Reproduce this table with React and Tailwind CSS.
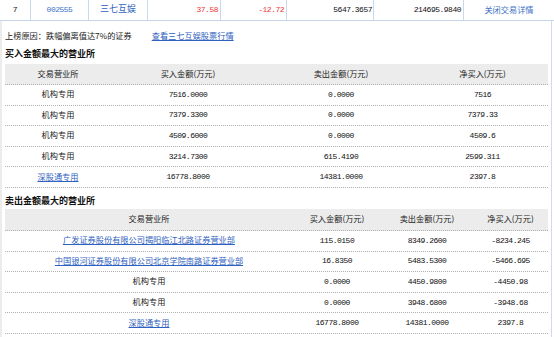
import React from "react";

const cjk = "font-['Noto_Sans_CJK_SC',sans-serif]";
const mono = "font-['Liberation_Mono',monospace] text-[8px] tracking-[-0.5px]";

const buyRows = [
  { name: "机构专用", buy: "7516.0000", sell: "0.0000", net: "7516" },
  { name: "机构专用", buy: "7379.3300", sell: "0.0000", net: "7379.33" },
  { name: "机构专用", buy: "4509.6000", sell: "0.0000", net: "4509.6" },
  { name: "机构专用", buy: "3214.7300", sell: "615.4190", net: "2599.311" },
  { name: "深股通专用", link: true, buy: "16778.8000", sell: "14381.0000", net: "2397.8" },
];

const sellRows = [
  { name: "广发证券股份有限公司揭阳临江北路证券营业部", link: true, buy: "115.0150", sell: "8349.2600", net: "-8234.245" },
  { name: "中国银河证券股份有限公司北京学院南路证券营业部", link: true, buy: "16.8350", sell: "5483.5300", net: "-5466.695" },
  { name: "机构专用", buy: "0.0000", sell: "4450.9800", net: "-4450.98" },
  { name: "机构专用", buy: "0.0000", sell: "3948.6800", net: "-3948.68" },
  { name: "深股通专用", link: true, buy: "16778.8000", sell: "14381.0000", net: "2397.8" },
];

function Table({ cols, rows, headerH }) {
  const head = ["交易营业所", "买入金额(万元)", "卖出金额(万元)", "净买入(万元)"];
  return (
    <div className="flex flex-col">
      <div
        className={`grid ${cols} ${headerH} items-center bg-[#ececec] border-b border-dotted border-[#b0b0b0]`}
      >
        {head.map((h) => (
          <div key={h} className={`${cjk} text-[8.2px] text-[#222] text-center leading-[10px] pb-[3px]`}>
            {h}
          </div>
        ))}
      </div>
      {rows.map((r, i) => (
        <div
          key={i}
          className={`grid ${cols} h-[20.6px] items-center border-b border-dotted border-[#b0b0b0]`}
        >
          <div
            className={`${cjk} text-[8.2px] leading-[10px] pb-[3px] text-center ${
              r.link ? "text-[#2f62c0] underline decoration-[#2f62c0]" : "text-[#222]"
            }`}
          >
            {r.name}
          </div>
          <div className={`${mono} text-center text-[#111] leading-[10px]`}>{r.buy}</div>
          <div className={`${mono} text-center text-[#111] leading-[10px]`}>{r.sell}</div>
          <div className={`${mono} text-center text-[#111] leading-[10px]`}>{r.net}</div>
        </div>
      ))}
    </div>
  );
}

export default function App() {
  const cell = "h-full flex items-center border-r border-[#c9d9ec] leading-[10px]";
  return (
    <div className="w-[554px] h-[337px] overflow-hidden bg-white flex flex-col">
      {/* top summary row */}
      <div className="flex h-[21px] border-b border-[#c4d6eb] shrink-0">
        <div className={`${cell} w-[31px] justify-center ${mono} text-[#111]`}>7</div>
        <div className={`${cell} w-[58px] justify-center ${mono} text-[#3d72c8]`}>002555</div>
        <div className={`${cell} w-[59px] justify-center pb-[2px] ${cjk} text-[9px] text-[#2f62c0]`}>三七互娱</div>
        <div className={`${cell} w-[73px] justify-end pr-[2px] ${mono} text-[#f03434]`}>37.58</div>
        <div className={`${cell} w-[66px] justify-end pr-[2px] ${mono} text-[#f03434]`}>-12.72</div>
        <div className={`${cell} w-[87px] justify-end pr-[1px] ${mono} text-[#111]`}>5647.3657</div>
        <div className={`${cell} w-[90px] justify-end pr-[2px] ${mono} text-[#111]`}>214695.9840</div>
        <div className={`h-full flex items-center flex-1 justify-center pb-[2px] leading-[10px] ${cjk} text-[8.2px] text-[#3d72c8]`}>
          关闭交易详情
        </div>
      </div>

      {/* detail panel */}
      <div className="w-[552px] flex-1 border-l-2 border-r border-l-[#ececec] border-r-[#cfdbe8] pl-[3px] pr-[3px] pt-[7px] flex flex-col">
        <div className="flex items-center h-[13px]">
          <span className={`${cjk} text-[8.2px] text-[#222] leading-[10px]`}>上榜原因：跌幅偏离值达7%的证券</span>
          <span
            className={`${cjk} text-[8.2px] text-[#2f62c0] underline decoration-[#2f62c0] leading-[10px] ml-[20px]`}
          >
            查看三七互娱股票行情
          </span>
        </div>
        <div className={`h-[13px] mt-[6px] flex items-center ${cjk} text-[9px] font-bold text-[#111] leading-[10px]`}>
          买入金额最大的营业所
        </div>
        <div className="mt-[4px]">
          <Table cols="grid-cols-[106px_154px_152px_1fr]" rows={buyRows} headerH="h-[21px]" />
        </div>
        <div className={`h-[13px] mt-[7px] flex items-center ${cjk} text-[9px] font-bold text-[#111] leading-[10px]`}>
          卖出金额最大的营业所
        </div>
        <div className="mt-[1px]">
          <Table cols="grid-cols-[288px_88px_92px_1fr]" rows={sellRows} headerH="h-[22px]" />
        </div>
      </div>
    </div>
  );
}
